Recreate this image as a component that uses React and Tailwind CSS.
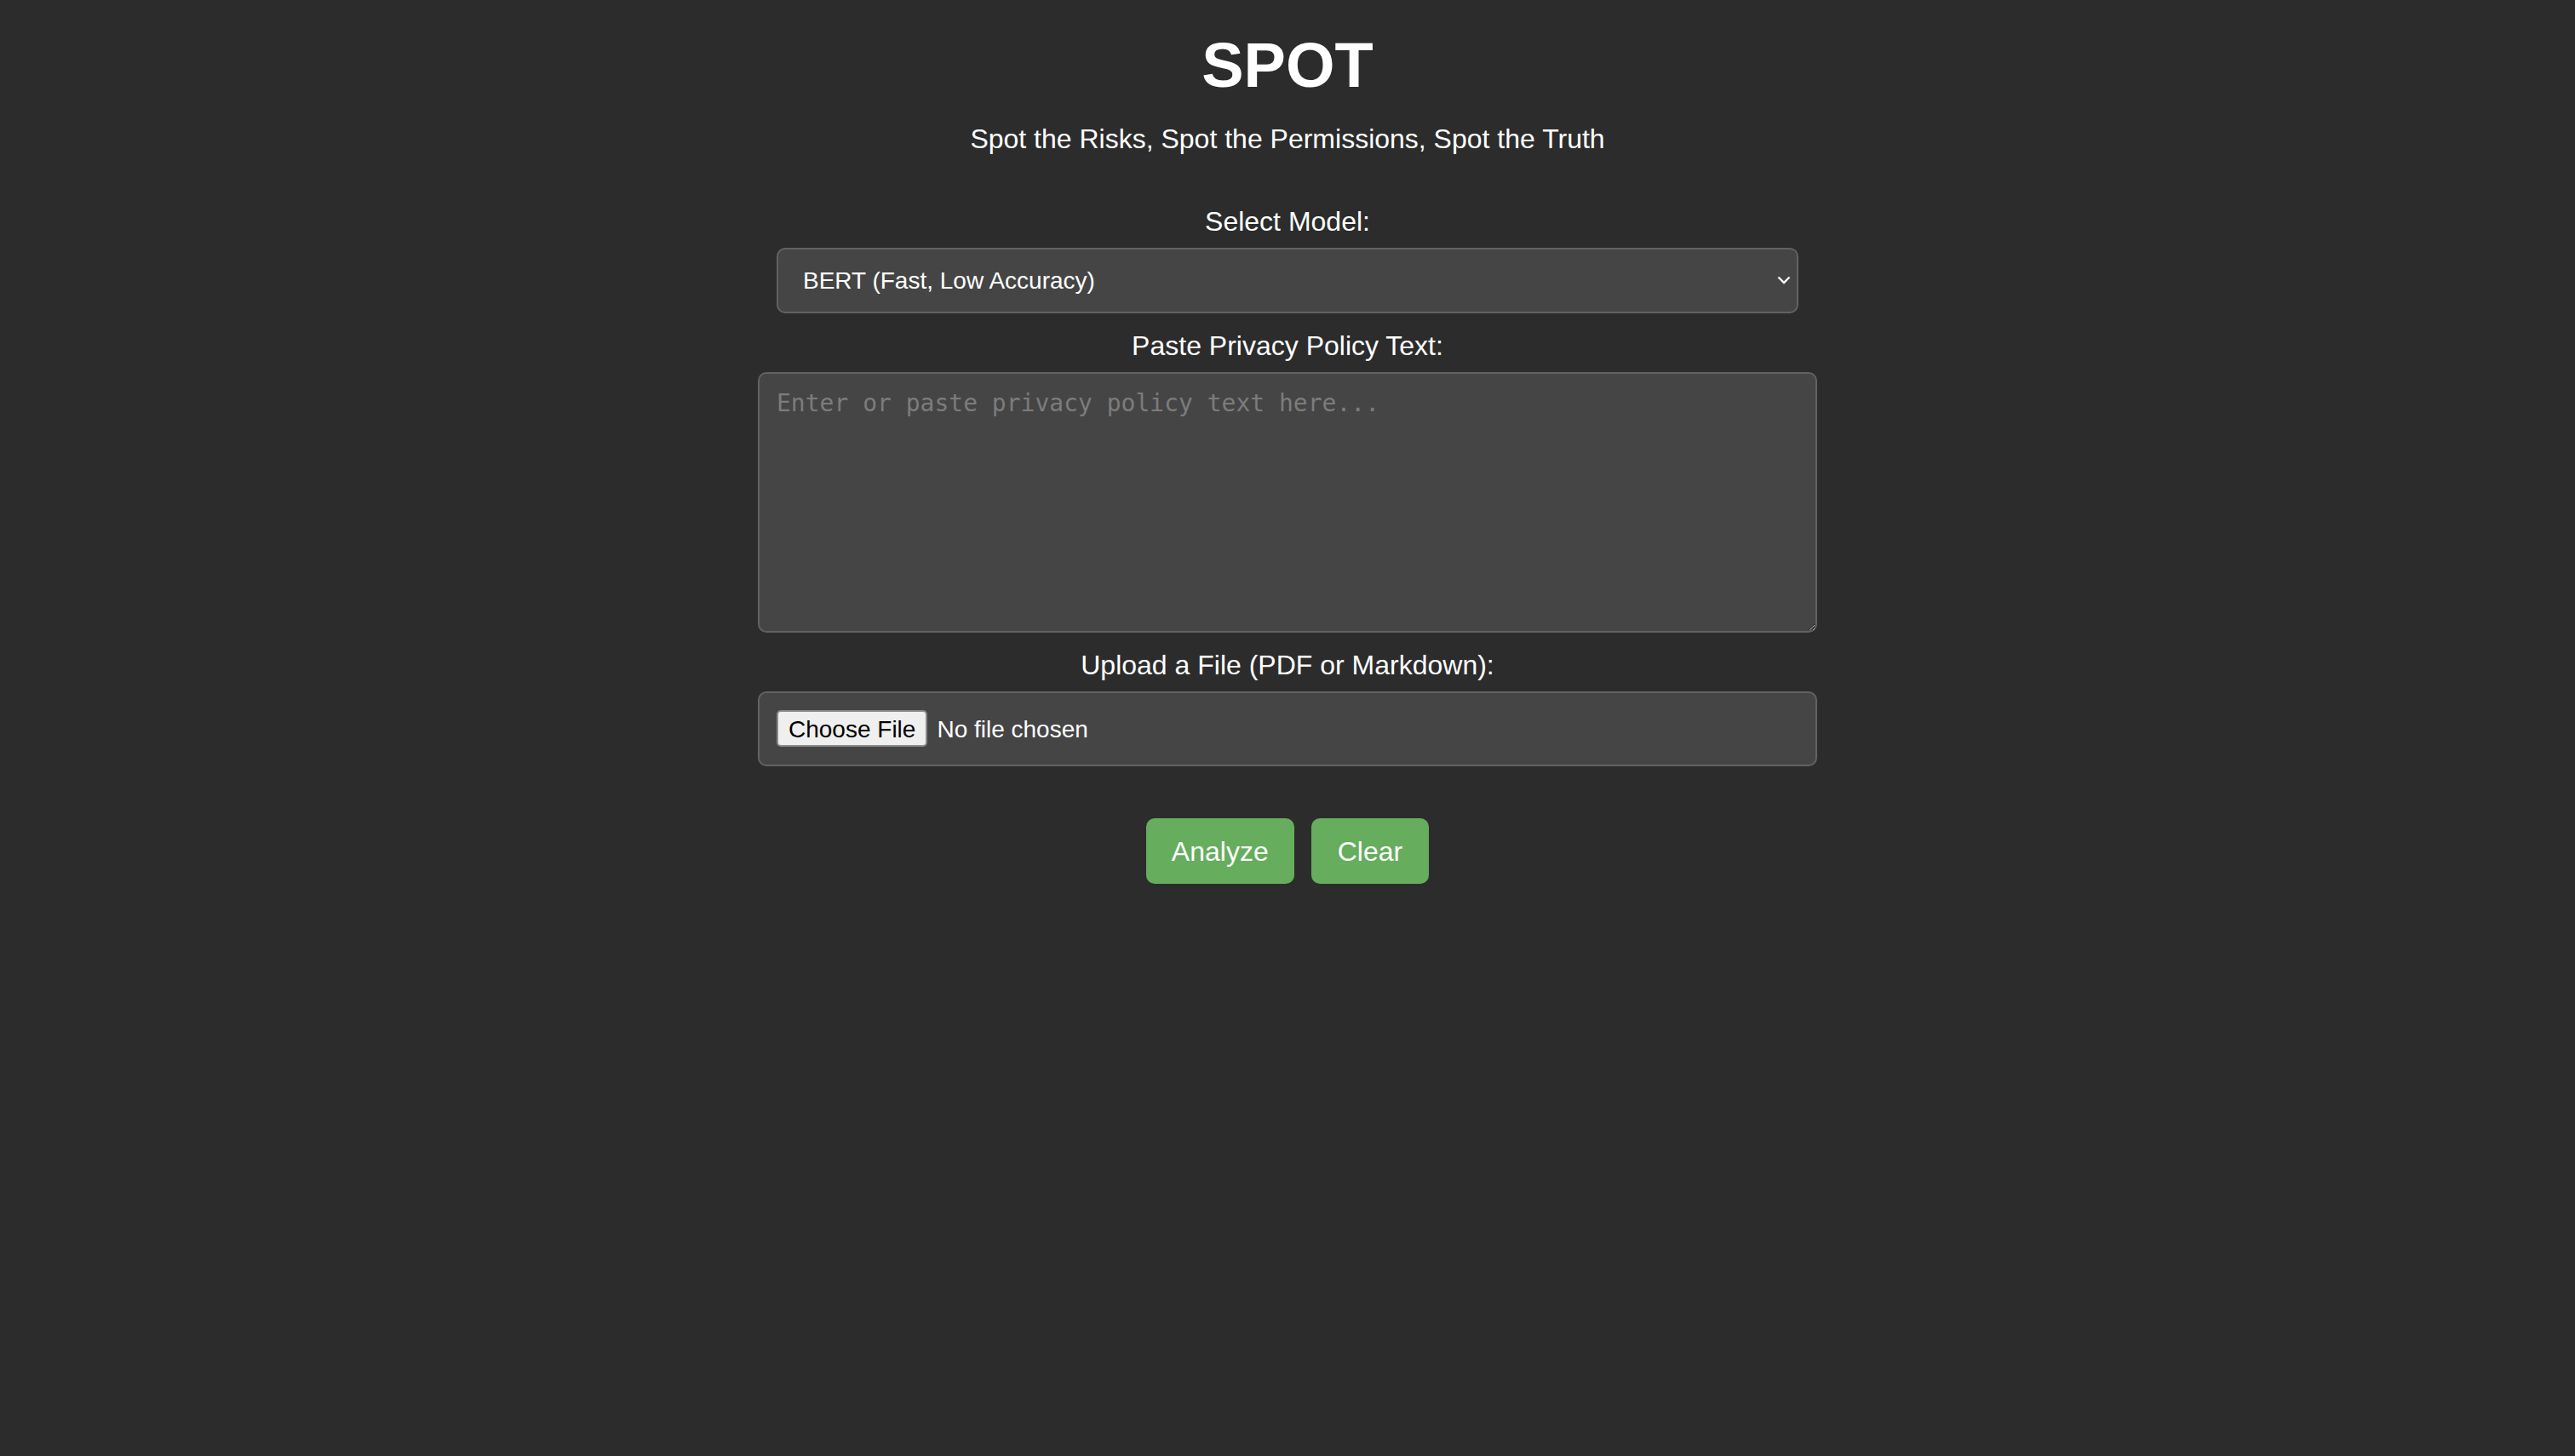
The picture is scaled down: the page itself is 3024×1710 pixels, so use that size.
import { useState } from 'react'

function Label({ children, htmlFor }) {
  return (
    <label htmlFor={htmlFor} className="block text-center text-[32px] leading-[37px] text-white">
      {children}
    </label>
  )
}

export default function App() {
  const [model, setModel] = useState('bert')
  const [text, setText] = useState('')

  return (
    <div className="min-h-screen bg-[#2c2c2c] pt-[34px] font-['Liberation_Sans',Arial,sans-serif] text-white">
      <h1 className="text-center text-[74px] font-bold leading-[85px]">SPOT</h1>
      <p className="mt-[26px] text-center text-[32px] leading-[37px]">
        Spot the Risks, Spot the Permissions, Spot the Truth
      </p>

      <div className="mx-auto mt-[60px] flex w-[1200px] flex-col items-center">
        <Label htmlFor="model">Select Model:</Label>
        <div className="relative mt-[12px] w-full">
          <select
            id="model"
            value={model}
            onChange={(e) => setModel(e.target.value)}
            className="h-[77px] w-full appearance-none rounded-[10px] border-2 border-[#626262] bg-[#454545] pl-[29px] text-[28px] text-white outline-none"
          >
            <option value="bert">BERT (Fast, Low Accuracy)</option>
            <option value="llm">LLM (Slow, High Accuracy)</option>
          </select>
          <svg
            className="pointer-events-none absolute right-[9px] top-[33px]"
            width="16"
            height="10"
            viewBox="0 0 16 10"
            fill="none"
          >
            <path d="M1.5 1.5L8 8L14.5 1.5" stroke="white" strokeWidth="2.4" />
          </svg>
        </div>

        <div className="mt-[20px]">
          <Label htmlFor="policy">Paste Privacy Policy Text:</Label>
        </div>
        <textarea
          id="policy"
          value={text}
          onChange={(e) => setText(e.target.value)}
          placeholder="Enter or paste privacy policy text here..."
          className="mt-[12px] box-content h-[282px] w-full shrink-0 rounded-[10px] border-2 border-[#626262] bg-[#454545] px-[20px] pt-[18px] pb-[2px] font-['DejaVu_Sans_Mono',monospace] text-[28px] leading-[33px] text-white outline-none placeholder:text-[#7c7c7c]"
        />

        <div className="mt-[20px]">
          <Label htmlFor="file">Upload a File (PDF or Markdown):</Label>
        </div>
        <div className="mt-[12px] box-content flex h-[44px] w-full shrink-0 items-center rounded-[10px] border-2 border-[#626262] bg-[#454545] px-[20px] py-[20px]">
          <input
            id="file"
            type="file"
            accept=".pdf,.md"
            className="text-[28px] text-white file:mr-[11px] file:h-[43px] file:rounded-[5px] file:border-2 file:border-solid file:border-[#8a8a8a] file:bg-[#efefef] file:px-[12px] file:text-[28px] file:text-black"
          />
        </div>

        <div className="mt-[61px] flex gap-[20px]">
          <button className="h-[77px] rounded-[10px] bg-[#66ad5e] px-[30px] text-[32px] text-white">
            Analyze
          </button>
          <button className="h-[77px] rounded-[10px] bg-[#66ad5e] px-[31px] text-[32px] text-white">
            Clear
          </button>
        </div>
      </div>
    </div>
  )
}
